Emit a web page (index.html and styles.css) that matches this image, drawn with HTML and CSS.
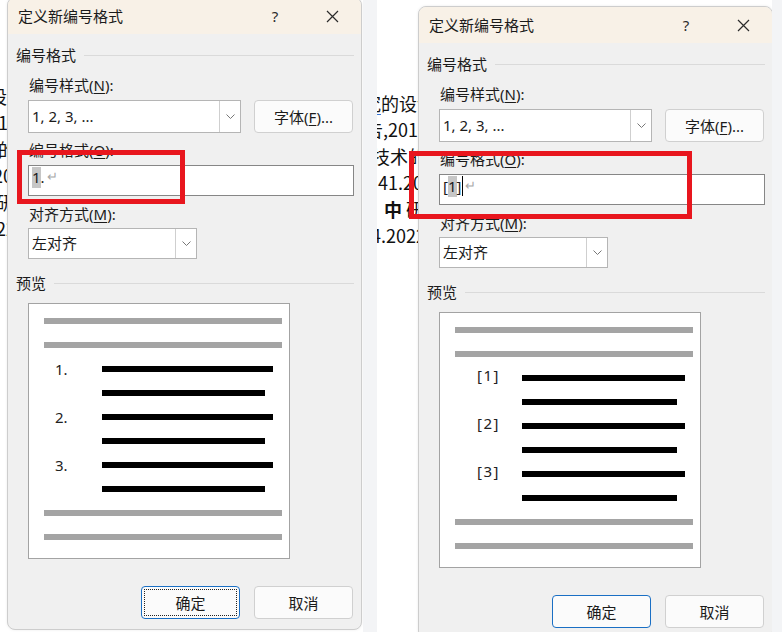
FILE: index.html
```html
<!DOCTYPE html>
<html lang="zh-CN">
<head>
<meta charset="utf-8">
<title>定义新编号格式</title>
<link rel="stylesheet" href="styles.css">
</head>
<body>
<div class="shot shot-a">
  <div class="page">
    <div class="doc">
      <p class="l1"><span class="spell">究</span>的设计与实现</p>
      <p class="l2">告,2016年的</p>
      <p class="l3">技术的研究</p>
      <p class="l4">41.2022</p>
      <p class="l5"><b>中</b> 研究</p>
      <p class="l6">4.2022</p>
    </div>
    <div class="dialog fmt-dot">
      <div class="titlebar">
        <span class="title">定义新编号格式</span>
        <span class="help">?</span>
        <span class="close"><svg width="13" height="13" viewBox="0 0 13 13"><path d="M1 1L12 12M12 1L1 12" stroke="#2b2b2b" stroke-width="1.2" fill="none"/></svg></span>
      </div>
      <div class="body">
        <div class="group"><span>编号格式</span><i class="rule"></i></div>
        <div class="label first">编号样式(<u>N</u>):</div>
        <div class="row">
          <div class="combo c-style"><span class="val">1, 2, 3, ...</span><span class="drop"><svg width="9" height="5" viewBox="0 0 9 5"><polyline points="0.5,0.5 4.5,4.5 8.5,0.5" stroke="#777" fill="none"/></svg></span></div>
          <div class="btn">字体(<u>F</u>)...</div>
        </div>
        <div class="label second">编号格式(<u>O</u>):</div>
        <div class="input"><span class="sel">1</span>.<span class="ret">↵</span></div>
        <div class="label third">对齐方式(<u>M</u>):</div>
        <div class="combo c-align"><span class="val">左对齐</span><span class="drop"><svg width="9" height="5" viewBox="0 0 9 5"><polyline points="0.5,0.5 4.5,4.5 8.5,0.5" stroke="#777" fill="none"/></svg></span></div>
        <div class="group g-prev"><span>预览</span><i class="rule"></i></div>
        <div class="preview">
          <div class="pr"><i class="g"></i></div>
          <div class="pr"><i class="g"></i></div>
          <div class="pr"><span class="num">1.</span><i class="b long"></i></div>
          <div class="pr"><span class="num"></span><i class="b short"></i></div>
          <div class="pr"><span class="num">2.</span><i class="b long"></i></div>
          <div class="pr"><span class="num"></span><i class="b short"></i></div>
          <div class="pr"><span class="num">3.</span><i class="b long"></i></div>
          <div class="pr"><span class="num"></span><i class="b short"></i></div>
          <div class="pr"><i class="g"></i></div>
          <div class="pr"><i class="g"></i></div>
        </div>
        <div class="buttons">
          <div class="btn default focus">确定</div>
          <div class="btn">取消</div>
        </div>
      </div>
    </div>
    <div class="redbox rb-a"></div>
  </div>
  <div class="gutter"></div>
</div>

<div class="shot shot-b">
  <div class="page">
    <div class="doc">
      <p class="l1"><span class="spell">究</span>的设计与实现</p>
      <p class="l2">告,2016年的</p>
      <p class="l3">技术的研究</p>
      <p class="l4">41.2022</p>
      <p class="l5"><b>中</b> 研究</p>
      <p class="l6">4.2022</p>
    </div>
    <div class="dialog fmt-br">
      <div class="titlebar">
        <span class="title">定义新编号格式</span>
        <span class="help">?</span>
        <span class="close"><svg width="13" height="13" viewBox="0 0 13 13"><path d="M1 1L12 12M12 1L1 12" stroke="#2b2b2b" stroke-width="1.2" fill="none"/></svg></span>
      </div>
      <div class="body">
        <div class="group"><span>编号格式</span><i class="rule"></i></div>
        <div class="label first">编号样式(<u>N</u>):</div>
        <div class="row">
          <div class="combo c-style"><span class="val">1, 2, 3, ...</span><span class="drop"><svg width="9" height="5" viewBox="0 0 9 5"><polyline points="0.5,0.5 4.5,4.5 8.5,0.5" stroke="#777" fill="none"/></svg></span></div>
          <div class="btn">字体(<u>F</u>)...</div>
        </div>
        <div class="label second">编号格式(<u>O</u>):</div>
        <div class="input">[<span class="sel">1</span>]<span class="caret"></span><span class="ret">↵</span></div>
        <div class="label third">对齐方式(<u>M</u>):</div>
        <div class="combo c-align"><span class="val">左对齐</span><span class="drop"><svg width="9" height="5" viewBox="0 0 9 5"><polyline points="0.5,0.5 4.5,4.5 8.5,0.5" stroke="#777" fill="none"/></svg></span></div>
        <div class="group g-prev"><span>预览</span><i class="rule"></i></div>
        <div class="preview">
          <div class="pr"><i class="g"></i></div>
          <div class="pr"><i class="g"></i></div>
          <div class="pr"><span class="num">[1]</span><i class="b long"></i></div>
          <div class="pr"><span class="num"></span><i class="b short"></i></div>
          <div class="pr"><span class="num">[2]</span><i class="b long"></i></div>
          <div class="pr"><span class="num"></span><i class="b short"></i></div>
          <div class="pr"><span class="num">[3]</span><i class="b long"></i></div>
          <div class="pr"><span class="num"></span><i class="b short"></i></div>
          <div class="pr"><i class="g"></i></div>
          <div class="pr"><i class="g"></i></div>
        </div>
        <div class="buttons">
          <div class="btn default">确定</div>
          <div class="btn">取消</div>
        </div>
      </div>
    </div>
    <div class="redbox rb-b"></div>
  </div>
  <div class="gutter"></div>
</div>
</body>
</html>
```

FILE: styles.css
```css
* { box-sizing: border-box; margin: 0; padding: 0; }
html, body { width: 782px; height: 632px; overflow: hidden; background: #fff; }
body {
  display: flex;
  font-family: "Noto Sans", "Noto Sans CJK SC", sans-serif;
  color: #1b1b1b;
}

.shot { display: flex; height: 632px; }
.shot-a { width: 377px; }
.shot-b { width: 405px; }
.page { position: relative; flex: 1; overflow: hidden; background: #fff; }
.gutter { background: #f3f4f6; }
.shot-a .gutter { width: 14px; }
.shot-b .gutter { width: 10px; }

/* background document text (only the strip left of the dialog is visible) */
.doc {
  font-family: "Noto Sans CJK SC", sans-serif;
  font-size: 18px;
  line-height: 26.4px;
  white-space: nowrap;
  color: #111;
  overflow: hidden;
}
.shot-a .doc { padding-top: 83px; margin-left: -33px; width: 41px; }
.shot-b .doc { padding-top: 90px; width: 42px; }
.doc .l1 { text-indent: -14px; }
.doc .l2 { text-indent: -12px; }
.doc .l3 { text-indent: -5px; }
.doc .l4 { text-indent: 1px; }
.doc .l5 { text-indent: 7px; }
.doc .l6 { text-indent: -6px; }
.spell { text-decoration: underline; text-decoration-color: #3b78d8; text-underline-offset: 3px; }

/* dialog */
.dialog {
  position: absolute;
  width: 355px;
  height: 633px;
  background: #f0f0f0;
  border: 1px solid #cdcdcd;
  border-radius: 8px;
  overflow: hidden;
  font-size: 15px;
  box-shadow: 0 0 3px rgba(0,0,0,0.08);
}
.shot-a .dialog { left: 7px; top: -3px; }
.shot-b .dialog { left: 41px; top: 6px; }

.titlebar {
  height: 36px;
  background: #f8f1e7;
  display: flex;
  align-items: center;
  padding-left: 10px;
  padding-right: 14px;
}
.title { flex: 1; line-height: 20px; }
.help { width: 30px; text-align: center; color: #2b2b2b; }
.close { width: 30px; margin-left: 27px; display: flex; justify-content: center; }

.body { padding-top: 11px; }
.group { display: flex; align-items: center; height: 20px; line-height: 20px; padding-left: 8px; width: 346px; }
.group .rule { flex: 1; height: 1px; background: #dadada; margin-left: 8px; }
.g-prev { margin-top: 14px; }

.label { height: 20px; line-height: 20px; margin-left: 21px; }
.label.first { margin-top: 10px; }
.label.second { margin-top: 7px; }
.label.third { margin-top: 8px; }
u { text-underline-offset: 2px; }

.row { display: flex; margin-top: 5px; margin-left: 20px; gap: 13px; }

.combo { display: flex; background: #fff; border: 1px solid #b5b5b5; }
.combo .val { flex: 1; padding-left: 3px; }
.combo .drop { width: 21px; border-left: 1px solid #cfcfcf; display: flex; align-items: center; justify-content: center; }
.c-style { width: 213px; height: 33px; line-height: 31px; }
.c-align { width: 169px; height: 31px; line-height: 29px; margin-left: 20px; margin-top: 4px; }

.btn {
  width: 99px;
  height: 33px;
  border: 1px solid #d0d0d0;
  border-radius: 4px;
  background: #fbfbfb;
  display: flex;
  align-items: center;
  justify-content: center;
  position: relative;
}
.btn.default { border-color: #1a6fc4; }
.btn.focus::after {
  content: "";
  position: absolute;
  inset: 2px 2px;
  border: 1px dotted #222;
}

.input {
  margin-top: 5px;
  margin-left: 20px;
  width: 326px;
  height: 31px;
  background: #fff;
  border: 1px solid #868686;
  padding: 1px 0 0 3px;
  line-height: 21px;
  display: flex;
  align-items: flex-start;
}
.sel { background: #c6c6c6; }
.caret { width: 1px; height: 20px; background: #000; margin-left: 1px; }
.ret { color: #a8a8a8; font-size: 13px; line-height: 18px; margin-left: 2px; }

.preview {
  margin-top: 10px;
  margin-left: 20px;
  width: 262px;
  height: 256px;
  background: #fff;
  border: 1px solid #a3a3a3;
  padding-top: 5px;
}
.pr { height: 24px; display: flex; align-items: center; }
.pr .g { display: block; height: 6px; width: 238px; margin-left: 15px; background: #a4a4a4; }
.pr .b { display: block; height: 6px; background: #000; }
.num { font-size: 15px; line-height: 24px; color: #222; }
.fmt-dot .num { margin-left: 26px; width: 47px; }
.fmt-dot .b.long { width: 171px; }
.fmt-dot .b.short { width: 163px; }
.fmt-br .num { margin-left: 37px; width: 45px; position: relative; top: -3px; letter-spacing: 1.5px; }
.fmt-br .b.long { width: 163px; }
.fmt-br .b.short { width: 155px; }

.buttons { display: flex; gap: 14px; margin-top: 27px; margin-left: 133px; }

/* red annotation boxes */
.redbox { position: absolute; border: 5px solid #e8161e; z-index: 2; }
.rb-a { left: 17px; top: 150px; width: 168px; height: 54px; }
.rb-b { left: 32px; top: 151px; width: 283px; height: 68px; }
```
